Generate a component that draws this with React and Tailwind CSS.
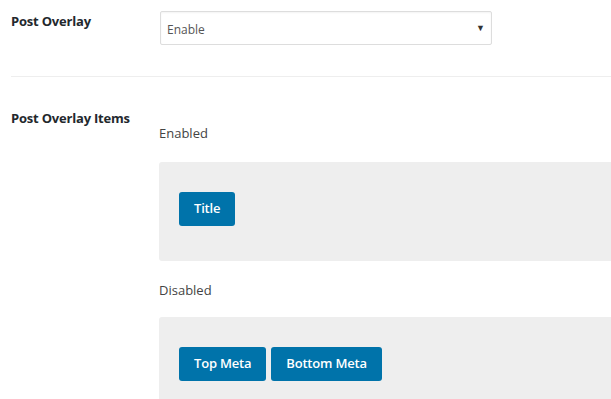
export default function App() {
  const font = { fontFamily: '"Open Sans", "Noto Sans", sans-serif' };
  return (
    <div className="w-[611px] h-[399px] overflow-hidden bg-white text-[#23282d]" style={font}>
      <div className="flex pl-[11px] pt-[11px] h-[76px]">
        <div className="w-[149px] pt-[1px] text-[13px] font-bold leading-[18px] tracking-[-0.2px]">Post Overlay</div>
        <div className="w-[332px] h-[34px] border border-[#dddddd] rounded-[2px] flex items-center justify-between pl-[6px] pr-[6px] pt-[3px] shadow-[inset_0_1px_2px_rgba(0,0,0,0.05)]">
          <span className="text-[12px] text-[#555]">Enable</span>
          <span className="text-[9px] text-[#333] -mt-[3px]">▼</span>
        </div>
      </div>
      <div className="ml-[11px] h-px bg-[#eeeeee]" />
      <div className="flex pl-[11px] pt-[32px]">
        <div className="w-[148px] text-[13px] font-bold leading-[18px] tracking-[-0.2px]">Post Overlay Items</div>
        <div className="flex-1 pt-[15px]">
          <div className="text-[13px] text-[#444] leading-[18px]">Enabled</div>
          <div className="mt-[20px] h-[99px] bg-[#eeeeee] rounded-tl-[3px] rounded-bl-[3px] pl-[20px] pt-[30px] flex gap-[5px] items-start">
            <Btn>Title</Btn>
          </div>
          <div className="mt-[20px] text-[13px] text-[#444] leading-[18px]">Disabled</div>
          <div className="mt-[18px] h-[99px] bg-[#eeeeee] rounded-tl-[3px] rounded-bl-[3px] pl-[20px] pt-[30px] flex gap-[5px] items-start">
            <Btn>Top Meta</Btn>
            <Btn>Bottom Meta</Btn>
          </div>
        </div>
      </div>
    </div>
  );
}

function Btn({ children }) {
  return (
    <div className="h-[34px] px-[15px] bg-[#0073aa] rounded-[3px] text-white text-[13px] font-semibold flex items-center tracking-[-0.2px]">
      {children}
    </div>
  );
}
